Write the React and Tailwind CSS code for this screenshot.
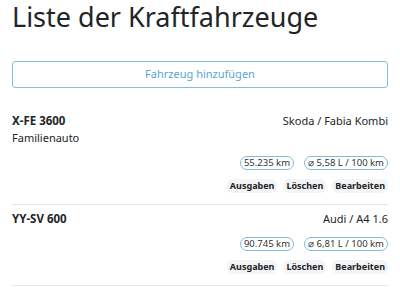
import React from "react";

const cars = [
  { plate: "X-FE 3600", model: "Skoda / Fabia Kombi", note: "Familienauto", km: "55.235 km", avg: "⌀ 5,58 L / 100 km" },
  { plate: "YY-SV 600", model: "Audi / A4 1.6", note: null, km: "90.745 km", avg: "⌀ 6,81 L / 100 km" },
];

function Row({ car }) {
  return (
    <div className="pt-[5px] pb-[11px] border-b border-[#e3e6ea]">
      <div className="flex justify-between items-center h-[17px]">
        <span className="text-[11.5px] font-bold leading-[17px]">{car.plate}</span>
        <span className="text-[11px] leading-[17px]">{car.model}</span>
      </div>
      {car.note && <div className="text-[11px] leading-[17px] h-[17px]">{car.note}</div>}
      <div className="flex justify-end gap-[10px] mt-[10px]">
        <span className="h-[14px] px-[3px] rounded-full border border-[#7dbbe0] text-[9.5px] leading-[12px] flex items-center text-[#333]">{car.km}</span>
        <span className="h-[14px] px-[3px] rounded-full border border-[#7dbbe0] text-[9.5px] leading-[12px] flex items-center text-[#333]">{car.avg}</span>
      </div>
      <div className="flex justify-end gap-[6px] mt-[9px]">
        {["Ausgaben", "Löschen", "Bearbeiten"].map((b) => (
          <span key={b} className="h-[14px] px-[3px] rounded-[6px] bg-[#f3f4f6] text-[9px] font-bold leading-[14px] text-[#222]">{b}</span>
        ))}
      </div>
    </div>
  );
}

export default function App() {
  return (
    <div className="w-[400px] h-[301px] bg-white px-3 font-['Noto_Sans',sans-serif] text-[#212529] overflow-hidden">
      <div className="pt-[3px]">
        <h1 className="text-[27px] leading-[28px] font-normal">Liste der Kraftfahrzeuge</h1>
      </div>
      <button className="mt-[30px] w-full h-[27px] border border-[#80bfe4] rounded-[3px] text-[11px] text-[#5aa6d3] bg-white block">
        Fahrzeug hinzufügen
      </button>
      <div className="mt-[19px]">
        {cars.map((c) => (
          <Row key={c.plate} car={c} />
        ))}
      </div>
    </div>
  );
}
